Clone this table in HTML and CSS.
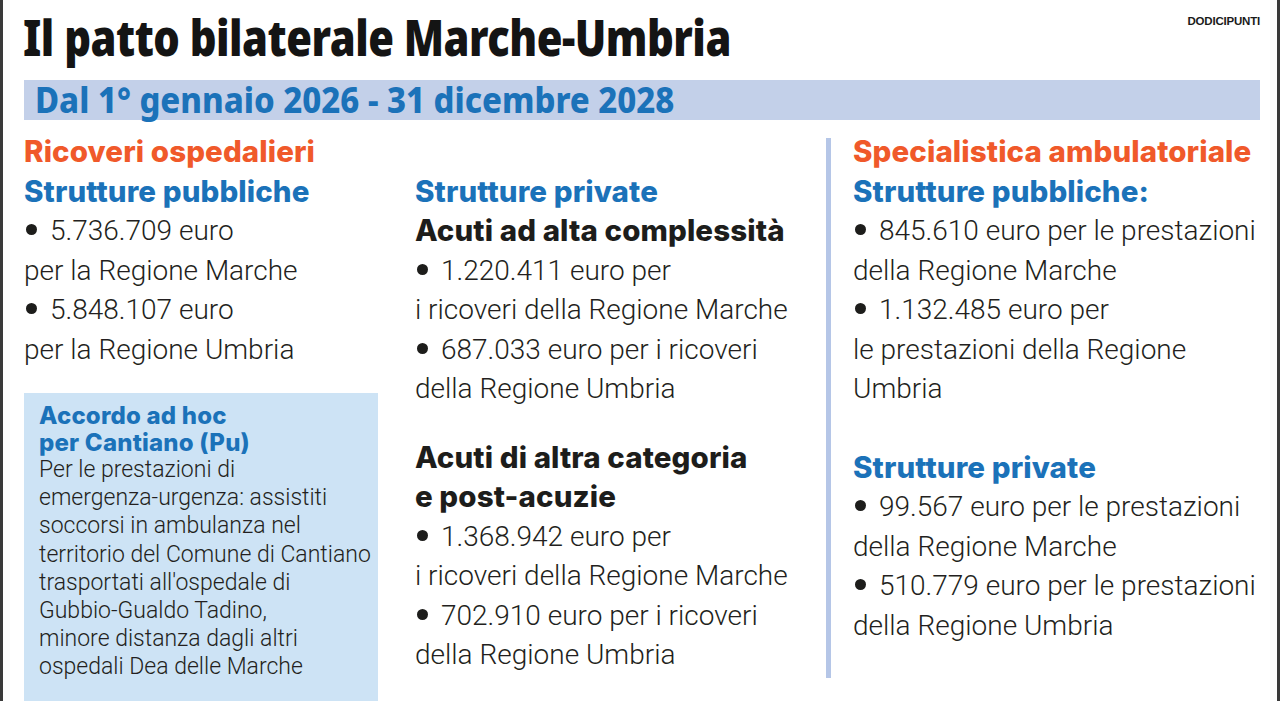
FILE: index.html
```html
<!DOCTYPE html>
<html lang="it">
<head>
<meta charset="utf-8">
<title>Il patto bilaterale Marche-Umbria</title>
<link rel="stylesheet" href="styles.css">
</head>
<body>
<div class="page">
  <header class="top">
    <h1 class="title">Il patto bilaterale Marche-Umbria</h1>
    <span class="brand">DODICIPUNTI</span>
  </header>
  <div class="band"><span class="band-text">Dal 1° gennaio 2026 - 31 dicembre 2028</span></div>
  <div class="cols">
    <section class="col col1">
      <div class="ln orange">Ricoveri ospedalieri</div>
      <div class="ln blue">Strutture pubbliche</div>
      <div class="ln"><span class="dot"></span>5.736.709 euro</div>
      <div class="ln">per la Regione Marche</div>
      <div class="ln"><span class="dot"></span>5.848.107 euro</div>
      <div class="ln">per la Regione Umbria</div>
      <div class="box">
        <div class="box-h">Accordo ad hoc</div>
        <div class="box-h">per Cantiano (Pu)</div>
        <div class="box-t">Per le prestazioni di</div>
        <div class="box-t">emergenza-urgenza: assistiti</div>
        <div class="box-t">soccorsi in ambulanza nel</div>
        <div class="box-t">territorio del Comune di Cantiano</div>
        <div class="box-t">trasportati all'ospedale di</div>
        <div class="box-t">Gubbio-Gualdo Tadino,</div>
        <div class="box-t">minore distanza dagli altri</div>
        <div class="box-t">ospedali Dea delle Marche</div>
      </div>
    </section>
    <section class="col col2">
      <div class="ln blue">Strutture private</div>
      <div class="ln black">Acuti ad alta complessità</div>
      <div class="ln"><span class="dot"></span>1.220.411 euro per</div>
      <div class="ln">i ricoveri della Regione Marche</div>
      <div class="ln"><span class="dot"></span>687.033 euro per i ricoveri</div>
      <div class="ln">della Regione Umbria</div>
      <div class="ln black gap2">Acuti di altra categoria</div>
      <div class="ln black">e post-acuzie</div>
      <div class="ln"><span class="dot"></span>1.368.942 euro per</div>
      <div class="ln">i ricoveri della Regione Marche</div>
      <div class="ln"><span class="dot"></span>702.910 euro per i ricoveri</div>
      <div class="ln">della Regione Umbria</div>
    </section>
    <div class="divider"></div>
    <section class="col col3">
      <div class="ln orange">Specialistica ambulatoriale</div>
      <div class="ln blue">Strutture pubbliche:</div>
      <div class="ln"><span class="dot"></span>845.610 euro per le prestazioni</div>
      <div class="ln">della Regione Marche</div>
      <div class="ln"><span class="dot"></span>1.132.485 euro per</div>
      <div class="ln">le prestazioni della Regione</div>
      <div class="ln">Umbria</div>
      <div class="ln blue gap3">Strutture private</div>
      <div class="ln"><span class="dot"></span>99.567 euro per le prestazioni</div>
      <div class="ln">della Regione Marche</div>
      <div class="ln"><span class="dot"></span>510.779 euro per le prestazioni</div>
      <div class="ln">della Regione Umbria</div>
    </section>
  </div>
</div>
</body>
</html>
```

FILE: styles.css
```css
* { box-sizing: border-box; }
html, body { margin: 0; padding: 0; background: #ffffff; }
body { font-family: Roboto, "Liberation Sans", sans-serif; color: #231f20; }

.page {
  width: 1280px;
  height: 701px;
  overflow: hidden;
  border-left: 3px solid #3a3a3a;
  border-right: 3px solid #3a3a3a;
  padding: 0 17px 0 21px;
}

.top {
  display: flex;
  justify-content: space-between;
  align-items: flex-start;
  height: 80px;
}
.title {
  margin: 9px 0 0 -1px;
  font-family: "Noto Sans", sans-serif;
  font-weight: 900;
  font-size: 50px;
  line-height: 56px;
  color: #141414;
  letter-spacing: -0.6px;
  white-space: nowrap;
  transform: scaleX(0.834);
  transform-origin: left center;
}
.brand {
  margin-top: 15px;
  font-family: "Liberation Sans", sans-serif;
  font-weight: 700;
  font-size: 11.5px;
  letter-spacing: -0.2px;
  color: #1a1a1a;
}

.band {
  background: #c3d0e9;
  height: 40px;
  padding-left: 11px;
  font-family: "Noto Sans", sans-serif;
  font-weight: 800;
  font-size: 35px;
  line-height: 40px;
  color: #1b72b9;
  white-space: nowrap;
}
.band-text {
  display: inline-block;
  transform: scaleX(0.94);
  transform-origin: left center;
}

.cols {
  display: grid;
  grid-template-columns: 354px 448px 5px 1fr;
  margin-top: 12px;
}
.col2 { margin-left: 37px; padding-top: 39.5px; }
.col3 { margin-left: 22px; }

.divider {
  background: #b5c6e7;
  margin-top: 6px;
  height: 540px;
}

.ln {
  font-weight: 300;
  font-size: 28px;
  line-height: 39.5px;
  white-space: nowrap;
  color: #231f20;
}
.orange, .blue, .black {
  font-family: Inter, Roboto, sans-serif;
  font-weight: 800;
  font-size: 29.5px;
  letter-spacing: 0.1px;
}
.orange { color: #f0592a; }
.blue { color: #1b72b9; }
.black { color: #1d1d1b; }
.gap2 { margin-top: 29px; }
.gap3 { margin-top: 39px; }

.dot {
  display: inline-block;
  width: 11px;
  height: 11px;
  border-radius: 50%;
  background: #1d1d1b;
  margin: 0 13px 0 2px;
  vertical-align: 5px;
}

.box {
  margin-top: 24px;
  background: #cde3f5;
  padding: 9px 10px 30px 15px;
  height: 320px;
}
.box-h {
  font-family: Inter, Roboto, sans-serif;
  font-weight: 800;
  font-size: 24px;
  line-height: 27px;
  letter-spacing: 0.2px;
  color: #1b72b9;
}
.box-t {
  font-weight: 300;
  font-size: 23px;
  line-height: 28.2px;
  white-space: nowrap;
  color: #231f20;
}
```
